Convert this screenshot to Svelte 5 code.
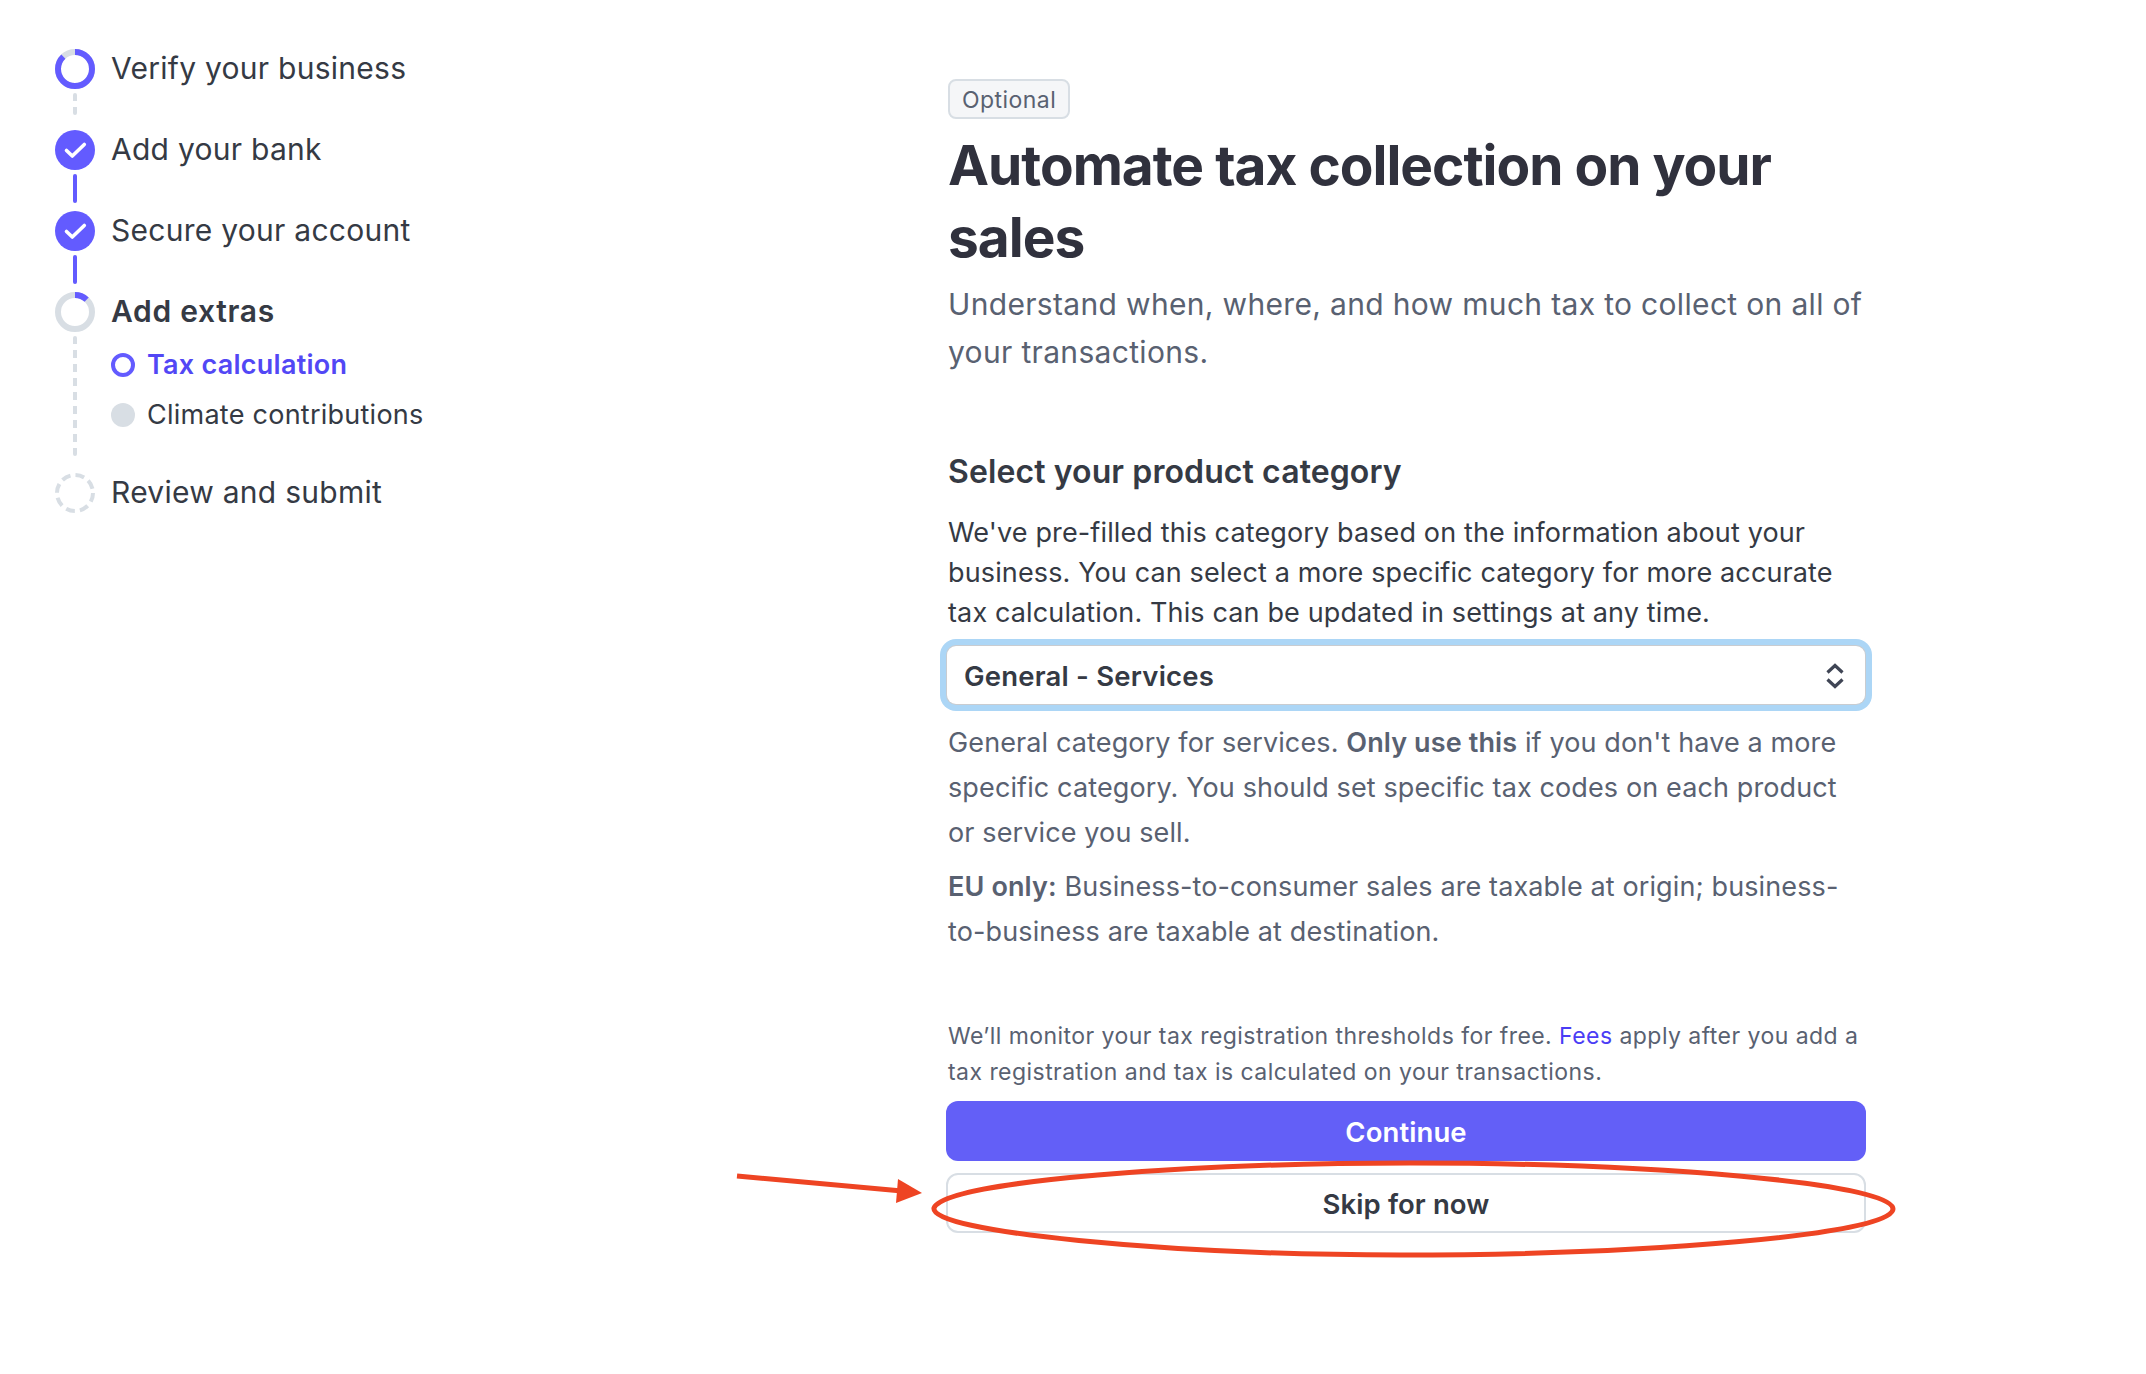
<script>
  const tick = "M11.5 20.5l5.8 5.5 12-11.5";
</script>

<div class="page">
  <nav class="steps">
    <div class="step">
      <svg class="ring" viewBox="0 0 40 40">
        <circle cx="20" cy="20" r="17" class="track" />
        <circle cx="20" cy="20" r="17" class="arc" pathLength="100" stroke-dasharray="88 100" transform="rotate(-90 20 20)" />
      </svg>
      <span>Verify your business</span>
    </div>
    <div class="link dotted short"></div>
    <div class="step">
      <svg class="ring" viewBox="0 0 40 40">
        <circle cx="20" cy="20" r="20" fill="#635bff" />
        <path d={tick} class="tick" />
      </svg>
      <span>Add your bank</span>
    </div>
    <div class="link solid"></div>
    <div class="step">
      <svg class="ring" viewBox="0 0 40 40">
        <circle cx="20" cy="20" r="20" fill="#635bff" />
        <path d={tick} class="tick" />
      </svg>
      <span>Secure your account</span>
    </div>
    <div class="link solid"></div>
    <div class="step current">
      <svg class="ring" viewBox="0 0 40 40">
        <circle cx="20" cy="20" r="17" class="track" />
        <circle cx="20" cy="20" r="17" class="arc" pathLength="100" stroke-dasharray="12 100" transform="rotate(-90 20 20)" />
      </svg>
      <span>Add extras</span>
    </div>
    <div class="subs">
      <div class="link dotted long"></div>
      <ul>
        <li class="active"><i class="dot"></i>Tax calculation</li>
        <li><i class="dot"></i>Climate contributions</li>
      </ul>
    </div>
    <div class="step">
      <svg class="ring" viewBox="0 0 40 40">
        <circle cx="20" cy="20" r="18" class="dashed" />
      </svg>
      <span>Review and submit</span>
    </div>
  </nav>

  <main class="content">
    <span class="badge">Optional</span>
    <h1>Automate tax collection on your sales</h1>
    <p class="lead">Understand when, where, and how much tax to collect on all of your transactions.</p>

    <h2>Select your product category</h2>
    <p class="intro">We've pre-filled this category based on the information about your business. You can select a more specific category for more accurate tax calculation. This can be updated in settings at any time.</p>

    <div class="select">
      <span>General - Services</span>
      <svg width="20" height="26" viewBox="0 0 20 26">
        <path d="M2.5 9.5L10 2.5l7.5 7M2.5 16.5l7.5 7 7.5-7" />
      </svg>
    </div>

    <p class="help first">General category for services. <b>Only use this</b> if you don't have a more specific category. You should set specific tax codes on each product or service you sell.</p>
    <p class="help"><b>EU only:</b> Business-to-consumer sales are taxable at origin; business-to-business are taxable at destination.</p>

    <p class="note">We’ll monitor your tax registration thresholds for free. <a href="#fees">Fees</a> apply after you add a tax registration and tax is calculated on your transactions.</p>

    <button class="btn primary">Continue</button>
    <button class="btn ghost">Skip for now</button>
  </main>

  <svg class="markup" width="2146" height="1374" viewBox="0 0 2146 1374">
    <path d="M737 1176L902 1191" class="pen" />
    <path d="M922 1193L898 1179L896 1203Z" fill="#ee4423" />
    <path d="M1410 1163C1200 1163 946 1180 934 1208C929 1232 1170 1255 1400 1255C1640 1255 1893 1235 1893 1209C1893 1183 1650 1163 1410 1163Z" class="pen" />
  </svg>
</div>

<style>
  :global(body) {
    margin: 0;
    background: #fff;
  }

  .page {
    position: relative;
    width: 2146px;
    height: 1374px;
    overflow: hidden;
    display: flex;
    font-family: Inter, "Liberation Sans", sans-serif;
    color: #3c4257;
  }

  .steps {
    width: 893px;
    padding: 49px 0 0 55px;
    box-sizing: border-box;
    flex: none;
  }

  .step {
    display: flex;
    align-items: center;
    gap: 16px;
    height: 40px;
    font-size: 30px;
    line-height: 38px;
    letter-spacing: 0.27px;
    color: #353a44;
  }

  .step span {
    margin-top: -2px;
  }

  .step.current {
    font-weight: 600;
    letter-spacing: 0.7px;
  }

  .ring {
    width: 40px;
    height: 40px;
    flex: none;
  }

  .track {
    fill: none;
    stroke: #d8dee4;
    stroke-width: 6;
  }

  .arc {
    fill: none;
    stroke: #635bff;
    stroke-width: 6;
  }

  .dashed {
    fill: none;
    stroke: #d8dee4;
    stroke-width: 4;
    stroke-dasharray: 9 5.13;
  }

  .tick {
    fill: none;
    stroke: #fff;
    stroke-width: 3.6;
    stroke-linecap: round;
    stroke-linejoin: round;
  }

  .link {
    width: 4px;
    margin-left: 18px;
    border-radius: 2px;
  }

  .solid {
    height: 29px;
    margin-top: 4px;
    margin-bottom: 8px;
    background: #635bff;
  }

  .dotted {
    background: repeating-linear-gradient(#d8dee4 0 8px, transparent 8px 14px);
  }

  .short {
    height: 22px;
    margin-top: 4px;
    margin-bottom: 15px;
  }

  .subs {
    position: relative;
    display: flex;
    height: 141px;
  }

  .long {
    height: 120px;
    margin-top: 4px;
  }

  .subs ul {
    list-style: none;
    margin: 0;
    padding: 0;
    margin-left: 34px;
    padding-top: 21px;
  }

  .subs li {
    display: flex;
    align-items: center;
    gap: 12px;
    height: 24px;
    margin-bottom: 26px;
    font-size: 27px;
    line-height: 22px;
    letter-spacing: 0.25px;
    color: #353a44;
  }

  .dot {
    width: 24px;
    height: 24px;
    border-radius: 50%;
    background: #d8dee4;
    box-sizing: border-box;
    flex: none;
  }

  .active {
    font-weight: 600;
    letter-spacing: 0.15px;
    color: #5247f5 !important;
  }

  .active .dot {
    background: #fff;
    border: 4px solid #635bff;
  }

  .content {
    width: 916px;
    flex: none;
    margin-left: 55px;
    padding-top: 79px;
  }

  .badge {
    display: inline-block;
    box-sizing: border-box;
    height: 40px;
    padding: 0 12px;
    line-height: 38px;
    border: 2px solid #d8dee4;
    border-radius: 8px;
    background: #f5f6f8;
    font-size: 23px;
    letter-spacing: 0.45px;
    color: #596171;
    vertical-align: top;
  }

  h1 {
    margin: 10px 0 0;
    font-size: 55px;
    line-height: 72px;
    font-weight: 700;
    letter-spacing: -1px;
    color: #30313d;
  }

  .lead {
    margin: 7px -6px 0 0;
    font-size: 30px;
    line-height: 48px;
    letter-spacing: 0.33px;
    color: #596171;
  }

  h2 {
    margin: 74px 0 0;
    font-size: 32px;
    line-height: 44px;
    font-weight: 600;
    letter-spacing: 0.1px;
    color: #353a44;
  }

  .intro {
    margin: 19px 0 0;
    font-size: 27px;
    line-height: 40px;
    letter-spacing: 0.13px;
    color: #353a44;
  }

  .select {
    display: flex;
    align-items: center;
    justify-content: space-between;
    box-sizing: border-box;
    height: 58px;
    margin: 13px -1px 0;
    padding: 1px 20px 0 17px;
    border-radius: 9px;
    background: #fff;
    box-shadow: 0 0 0 1px #c9ccd0, 0 0 0 7px #acd6f6;
    font-size: 27.5px;
    font-weight: 600;
    letter-spacing: 0.2px;
    color: #353a44;
  }

  .select path {
    fill: none;
    stroke: #3f4555;
    stroke-width: 3.2;
  }

  .help {
    margin: 9px 0 0;
    font-size: 27px;
    line-height: 45px;
    letter-spacing: 0.12px;
    color: #596171;
  }

  .help.first {
    margin-top: 16px;
  }

  .help b {
    font-weight: 600;
  }

  .note {
    margin: 65px 0 0;
    font-size: 23px;
    line-height: 35.5px;
    letter-spacing: 0.45px;
    color: #596171;
  }

  .note a {
    color: #4a3df5;
    text-decoration: none;
  }

  .btn {
    display: block;
    box-sizing: border-box;
    width: 920px;
    height: 60px;
    margin: 0 -2px;
    padding-top: 3px;
    border-radius: 12px;
    font: 600 27.5px Inter, "Liberation Sans", sans-serif;
    letter-spacing: 0.1px;
  }

  .primary {
    margin-top: 11px;
    border: 0;
    background: #635ff7;
    color: #fff;
  }

  .ghost {
    margin-top: 12px;
    border: 2px solid #d8dee4;
    background: #fff;
    color: #353a44;
  }

  .markup {
    position: absolute;
    left: 0;
    top: 0;
    pointer-events: none;
  }

  .pen {
    fill: none;
    stroke: #ee4423;
    stroke-width: 5;
  }
</style>
